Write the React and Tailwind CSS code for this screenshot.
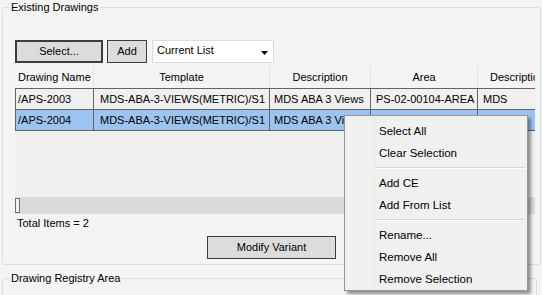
const columns = [
  { label: 'Drawing Name', width: 'w-[79px]', align: 'justify-start pl-[3px]' },
  { label: 'Template', width: 'w-[176px]', align: 'justify-center' },
  { label: 'Description', width: 'w-[101px]', align: 'justify-center' },
  { label: 'Area', width: 'w-[107px]', align: 'justify-center' },
  { label: 'Description', width: 'w-[80px]', align: 'justify-center' },
]

const rows = [
  { name: '/APS-2003', template: 'MDS-ABA-3-VIEWS(METRIC)/S1', desc: 'MDS ABA 3 Views', area: 'PS-02-00104-AREA', desc2: 'MDS', selected: false },
  { name: '/APS-2004', template: 'MDS-ABA-3-VIEWS(METRIC)/S1', desc: 'MDS ABA 3 Views', area: 'PS-02-00103-AREA', desc2: 'MDS', selected: true },
]

const menu = [
  ['Select All', 'Clear Selection'],
  ['Add CE', 'Add From List'],
  ['Rename...', 'Remove All', 'Remove Selection'],
]

function Row({ row }) {
  const bg = row.selected ? 'bg-[#9dc4f0]' : 'bg-[#f0f0f0]'
  const cell = 'flex h-[20px] items-center whitespace-nowrap overflow-hidden border-r border-[#646464]'
  return (
    <div className={`flex h-[21px] w-max border-b border-l border-[#646464] ${bg}`}>
      <div className={`${cell} w-[78px] pl-[2px]`}>{row.name}</div>
      <div className={`${cell} w-[176px] pl-[6px]`}>{row.template}</div>
      <div className={`${cell} w-[101px] pl-[4px]`}>{row.desc}</div>
      <div className={`${cell} w-[107px] pl-[5px]`}>{row.area}</div>
      <div className={`${cell} w-[80px] pl-[5px]`}>{row.desc2}</div>
    </div>
  )
}

function ContextMenu() {
  return (
    <div className="absolute left-[344px] top-[115px] flex h-[176px] w-[184px] border border-[#979797] bg-[#f0f0f0] text-[11.5px] shadow-[3px_3px_3px_rgba(0,0,0,0.4)]">
      <div className="w-[30px] border-r border-[#e9e9e9]" />
      <div className="flex flex-1 flex-col pt-[4px] pr-[2px]">
        {menu.map((group, gi) => (
          <div key={gi} className="flex flex-col">
            {gi > 0 && (
              <div className="flex h-[8px] items-center">
                <div className="h-[2px] w-full border-t border-b border-t-[#d7d7d7] border-b-white" />
              </div>
            )}
            {group.map((item) => (
              <div key={item} className="flex h-[22px] items-center pl-[4px]">
                {item}
              </div>
            ))}
          </div>
        ))}
      </div>
    </div>
  )
}

export default function App() {
  return (
    <div className="relative h-[295px] w-[542px] overflow-hidden bg-[#f4f4f4] font-['Liberation_Sans',Arial,sans-serif] text-[11px] leading-[13px] text-black">
      <fieldset className="ml-[2px] mt-[1px] h-[264px] w-[539px] rounded-[3px] border border-[#d5dfe5]">
        <legend className="ml-[6px] px-[2px]">Existing Drawings</legend>
        <div className="flex flex-col pl-[12px] pt-[26px]">
          <div className="flex items-center">
            <button className="h-[23px] w-[88px] border-2 border-[#3d3d3d] bg-[#dcdcdc]">Select...</button>
            <button className="ml-[4px] h-[23px] w-[40px] border border-[#3d3d3d] bg-[#dcdcdc]">Add</button>
            <div className="ml-[5px] flex h-[23px] w-[122px] items-center justify-between border border-[#dcdcdc] bg-white pl-[4px] pr-[5px]">
              <span className="-mt-[2px]">Current List</span>
              <svg width="7" height="4" viewBox="0 0 7 4" className="mt-[2px]">
                <path d="M0 0h7L3.5 4z" fill="#000" />
              </svg>
            </div>
          </div>

          <div className="mt-[4px] flex h-[147px] w-[520px] flex-col overflow-hidden bg-[#f0f0f0]">
            <div className="flex h-[21px] w-max bg-[#f4f4f4]">
              {columns.map((c, i) => (
                <div key={i} className={`flex h-[21px] items-center whitespace-nowrap border-r border-[#e3e3e3] ${c.width} ${c.align}`}>
                  {c.label}
                </div>
              ))}
            </div>
            <div className="border-t border-[#646464] w-max">
              {rows.map((r) => (
                <Row key={r.name} row={r} />
              ))}
            </div>
            <div className="flex-1" />
            <div className="flex h-[17px] items-center bg-[#dadada]">
              <div className="h-[15px] w-[5px] border border-[#707070] bg-[#f0f0f0]" />
            </div>
          </div>

          <div className="mt-[3px] pl-[2px]">Total Items = 2</div>

          <button className="ml-[192px] mt-[6px] h-[23px] w-[129px] self-start border border-[#3d3d3d] bg-[#dcdcdc]">
            Modify Variant
          </button>
        </div>
      </fieldset>

      <fieldset className="ml-[2px] mt-[7px] h-[40px] w-[535px] rounded-[3px] border border-[#d5dfe5]">
        <legend className="ml-[6px] px-[2px]">Drawing Registry Area</legend>
      </fieldset>

      <ContextMenu />
    </div>
  )
}
